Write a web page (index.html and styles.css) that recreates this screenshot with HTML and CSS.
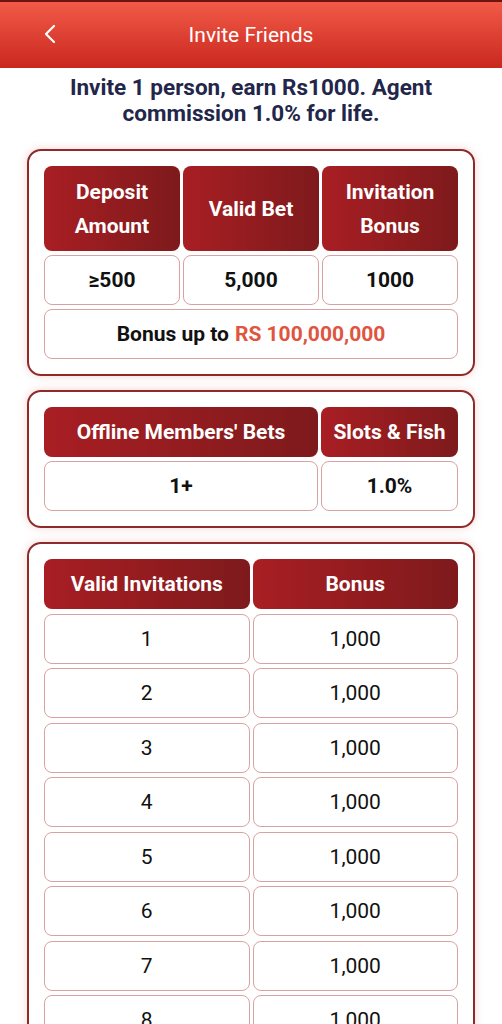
FILE: index.html
```html
<!DOCTYPE html>
<html lang="en">
<head>
  <meta charset="UTF-8" />
  <meta name="viewport" content="width=device-width, initial-scale=1.0" />
  <title>Invite Friends</title>
  <link rel="stylesheet" href="styles.css">
</head>
<body>
  <header class="topbar">
    <span class="back">
      <svg width="14" height="20" viewBox="0 0 14 20"><path d="M11 2 L3 10 L11 18" fill="none" stroke="#fff" stroke-width="2.2" stroke-linecap="round" stroke-linejoin="round"/></svg>
    </span>
    <h1>Invite Friends</h1>
  </header>

  <p class="intro">Invite 1 person, earn Rs1000. Agent commission 1.0% for life.</p>

  <div class="card">
    <div class="grid cols-3">
      <div class="th">Deposit<br>Amount</div>
      <div class="th">Valid Bet</div>
      <div class="th">Invitation<br>Bonus</div>
      <div class="td bold">≥500</div>
      <div class="td bold">5,000</div>
      <div class="td bold">1000</div>
      <div class="td bold wide">Bonus up to <span class="hl">RS 100,000,000</span></div>
    </div>
  </div>

  <div class="card">
    <div class="grid cols-2-1">
      <div class="th short">Offline Members' Bets</div>
      <div class="th short">Slots &amp; Fish</div>
      <div class="td bold">1+</div>
      <div class="td bold">1.0%</div>
    </div>
  </div>

  <div class="card last">
    <div class="grid cols-2" id="inviteTable">
      <div class="th short">Valid Invitations</div>
      <div class="th short">Bonus</div>
    </div>
  </div>

  <script>
    const table = document.getElementById('inviteTable');
    for (let i = 1; i <= 8; i++) {
      const a = document.createElement('div');
      a.className = 'td';
      a.innerText = i;
      const b = document.createElement('div');
      b.className = 'td';
      b.innerText = '1,000';
      table.appendChild(a);
      table.appendChild(b);
    }
  </script>
</body>
</html>
```

FILE: styles.css
```css
:root {
  --red-top: #f25a47;
  --red-bottom: #c9281f;
  --th-left: #a81e23;
  --th-right: #7e1a1c;
  --cell-border: #d9a2a2;
  --card-border: #8e2a2a;
  --navy: #22264a;
}

* {
  box-sizing: border-box;
}

body {
  font-family: Roboto, 'Noto Sans', sans-serif;
  margin: 0;
  background: #fff;
  color: #111;
  overflow: hidden;
  height: 1024px;
}

.topbar {
  height: 68px;
  border-top: 2px solid #6e1410;
  background: linear-gradient(to bottom, var(--red-top), var(--red-bottom));
  display: flex;
  align-items: center;
  justify-content: center;
  position: relative;
}

.topbar h1 {
  margin: 0;
  color: #fff;
  font-size: 21px;
  font-weight: 400;
}

.back {
  position: absolute;
  left: 43px;
  top: 22px;
  display: flex;
}

.intro {
  margin: 6px 50px 23px;
  text-align: center;
  color: var(--navy);
  font-weight: 700;
  font-size: 22.5px;
  line-height: 26px;
}

.card {
  margin: 0 27px 14px;
  border: 2px solid var(--card-border);
  border-radius: 14px;
  padding: 15px;
  box-shadow: 0 0 8px rgba(225, 80, 80, 0.25);
}

.card.last {
  padding-bottom: 40px;
}

.grid {
  display: grid;
  column-gap: 3px;
  row-gap: 4px;
}

.cols-3 {
  grid-template-columns: 1fr 1fr 1fr;
}

.cols-2-1 {
  grid-template-columns: 2fr 1fr;
}

.cols-2 {
  grid-template-columns: 1fr 1fr;
  row-gap: 4.5px;
}

.th {
  height: 85px;
  border-radius: 8px;
  background: linear-gradient(to right, var(--th-left), var(--th-right));
  color: #fff;
  font-weight: 700;
  font-size: 21px;
  line-height: 34px;
  display: flex;
  align-items: center;
  justify-content: center;
  text-align: center;
}

.th.short {
  height: 50px;
}

.td {
  height: 50px;
  border: 1px solid var(--cell-border);
  border-radius: 8px;
  display: flex;
  align-items: center;
  justify-content: center;
  font-size: 21px;
  color: #111;
}

.bold {
  font-weight: 700;
}

.wide {
  grid-column: 1 / -1;
}

.hl {
  color: #e0553f;
  margin-left: 6px;
}
```
